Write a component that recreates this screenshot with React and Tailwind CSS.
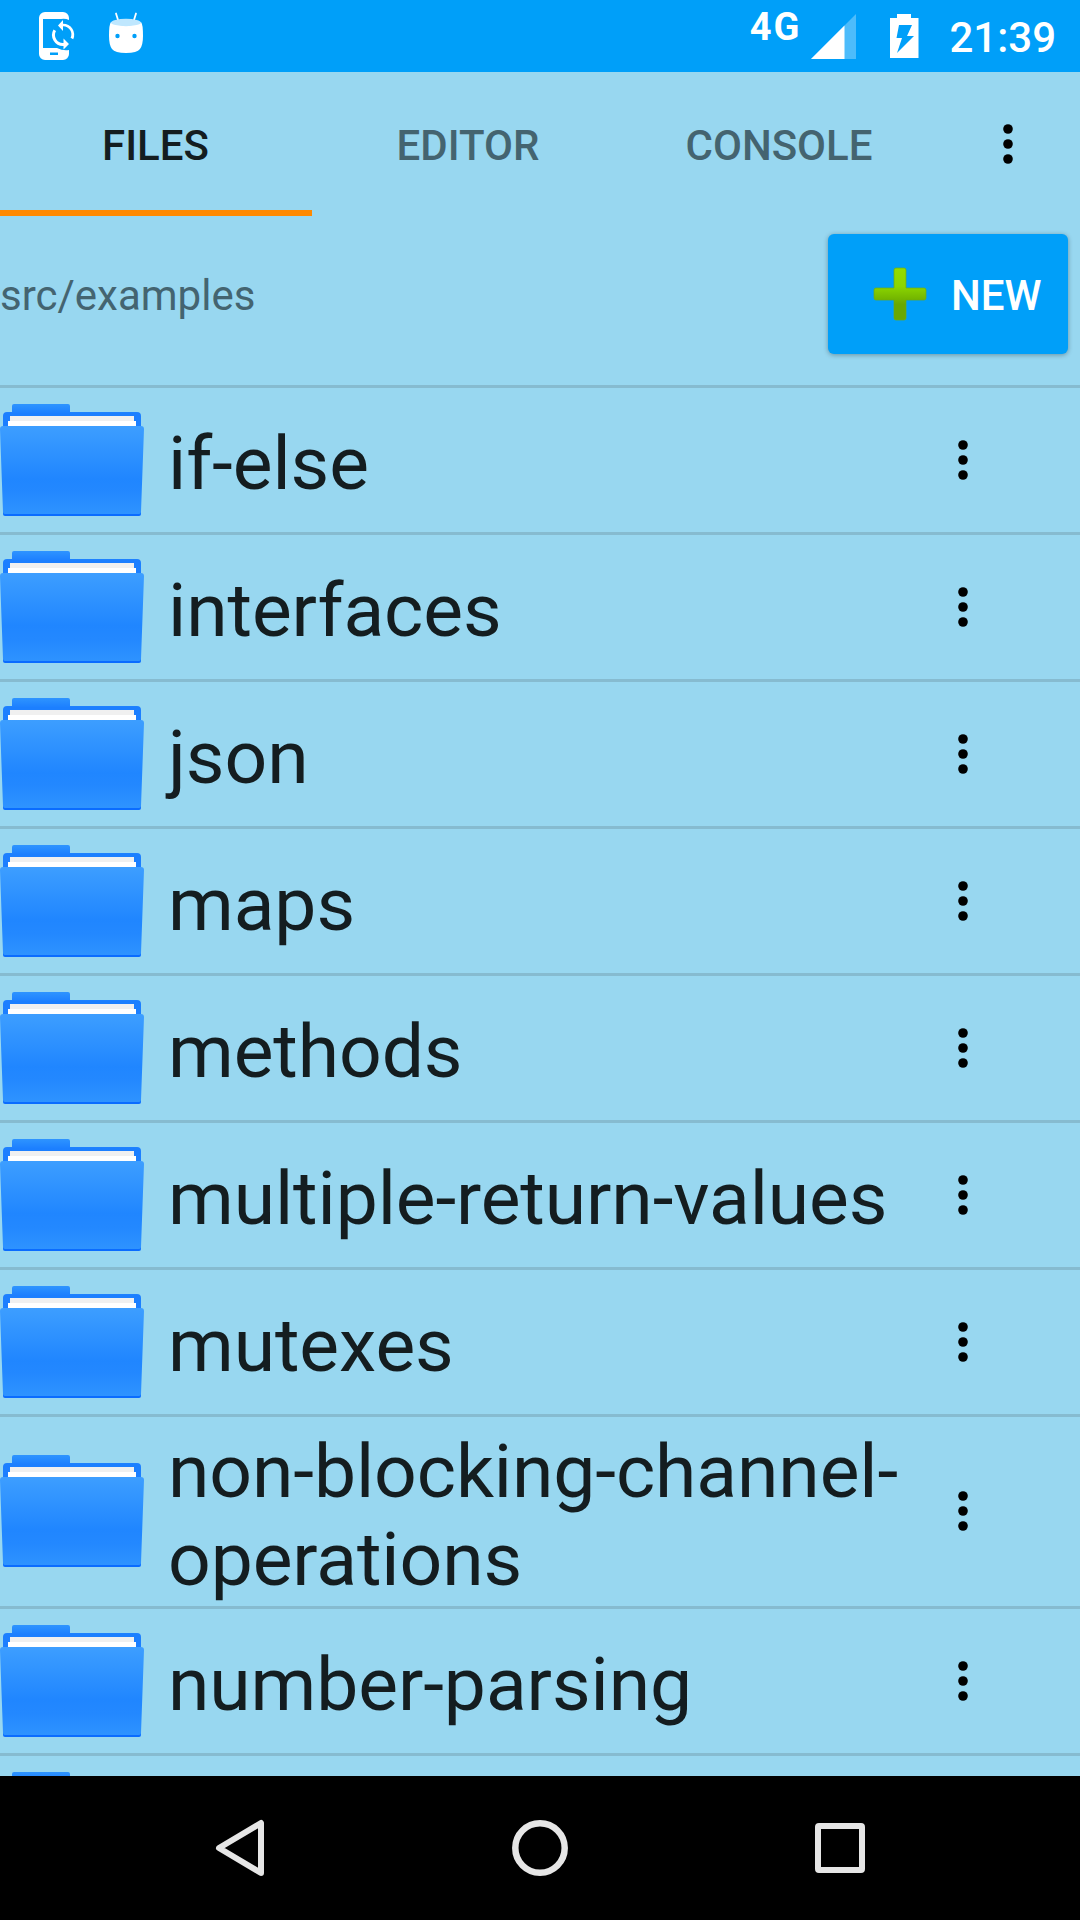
const FILES = [
  ["if-else"],
  ["interfaces"],
  ["json"],
  ["maps"],
  ["methods"],
  ["multiple-return-values"],
  ["mutexes"],
  ["non-blocking-channel-", "operations"],
  ["number-parsing"],
  [],
];

function Dots() {
  return (
    <svg width="12" height="42" viewBox="0 0 12 42" fill="#000">
      <circle cx="6" cy="6" r="4.8" />
      <circle cx="6" cy="21" r="4.8" />
      <circle cx="6" cy="36" r="4.8" />
    </svg>
  );
}

function Folder() {
  return (
    <svg width="144" height="112" viewBox="0 0 144 112" className="shrink-0">
      <defs>
        <linearGradient id="front" x1="0" y1="0" x2="0" y2="1">
          <stop offset="0" stopColor="#3d9eff" />
          <stop offset="0.6" stopColor="#2086ff" />
          <stop offset="0.75" stopColor="#2388ff" />
          <stop offset="1" stopColor="#2e93ff" />
        </linearGradient>
        <linearGradient id="back" x1="0" y1="0" x2="0" y2="1">
          <stop offset="0" stopColor="#2e94ff" />
          <stop offset="0.3" stopColor="#1c7fff" />
          <stop offset="1" stopColor="#1c7fff" />
        </linearGradient>
      </defs>
      <path d="M12 2a2 2 0 0 1 2-2h54a2 2 0 0 1 2 2v6h67a4 4 0 0 1 4 4v20H3V12a4 4 0 0 1 4-4h5z" fill="url(#back)" />
      <path d="M10 12h124v8H10z" fill="#f0f0f0" />
      <path d="M8 17h128v6H8z" fill="#fff" />
      <path d="M3 106h138v4a2 2 0 0 1-2 2H5a2 2 0 0 1-2-2z" fill="#0a6cff" />
      <path d="M0 25a3 3 0 0 1 3-3h138a3 3 0 0 1 3 3l-3 83a2 2 0 0 1-2 2H5a2 2 0 0 1-2-2z" fill="url(#front)" />
    </svg>
  );
}

function StatusBar() {
  return (
    <header className="flex h-[72px] shrink-0 bg-[#009ff9] text-white">
      <svg width="160" height="72" viewBox="0 0 160 72" fill="#fff">
        <path fillRule="evenodd" d="M45 12h18a6 6 0 0 1 6 6v2q-4-2-8-1H43v29h14q6 3 12 2v4a6 6 0 0 1-6 6H45a6 6 0 0 1-6-6V18a6 6 0 0 1 6-6zM50 52.500v2.500h8v-2.500z" />
        <path d="M58 25.500l5-5.500v3.700a11 11 0 0 1 10.200 15.600l-2.600-1.500A8 8 0 0 0 63 26.300V31z" />
        <path d="M69 44l-5.500 5.500V46A11 11 0 0 1 53.500 29.500l2.500 1.600A8 8 0 0 0 63.500 43v-4.500z" />
        <path d="M116 13.500l2.500 8M136 13.500l-2.500 8" stroke="#fff" strokeWidth="1.800" strokeLinecap="round" />
        <path fillRule="evenodd" d="M111 22q15 7 30 0 2 2 2 14 0 9-3 13-3 4-14 4t-14-4q-3-4-3-13 0-12 2-14zM117.500 33.800a2.200 2.200 0 1 0 0 4.400 2.200 2.200 0 0 0 0-4.400zM134.500 33.800a2.200 2.200 0 1 0 0 4.400 2.200 2.200 0 0 0 0-4.400z" />
        <ellipse cx="126" cy="22.500" rx="15" ry="3.700" fill="#bfe7fe" />
      </svg>
      <span className="mt-[8px] mr-[10px] ml-auto text-[38px] leading-[38px] font-bold tracking-[2px]">4G</span>
      <svg width="46" height="72" viewBox="0 0 46 72">
        <path d="M45 14v45H0z" fill="#4dbcfb" />
        <path d="M33.500 25.500V59H0z" fill="#fff" />
      </svg>
      <svg width="30" height="72" viewBox="0 0 30 72" className="ml-[32px]">
        <path fillRule="evenodd" d="M8 14h14v4h7.500v40H1V18h7zM10 25L7.500 38H13L8 53l17-17h-7l5-11z" fill="#fff" />
      </svg>
      <span className="mt-[17px] mr-[24px] ml-[30px] text-[42px] leading-[42px] font-medium">21:39</span>
    </header>
  );
}

function Tabs() {
  return (
    <nav className="flex h-36 shrink-0 text-[42px] font-medium text-[#446470]">
      <div className="flex w-[312px] items-center justify-center border-b-[6px] border-[#ff8900] pt-[8px] pr-px text-[#141d20]">FILES</div>
      <div className="flex w-[312px] items-center justify-center pt-[2px]">EDITOR</div>
      <div className="flex w-[312px] items-center justify-center pt-[2px] pr-[2px]">CONSOLE</div>
      <div className="flex flex-1 items-center justify-center"><Dots /></div>
    </nav>
  );
}

function PathRow() {
  return (
    <div className="flex h-[169px] shrink-0 items-start justify-between pt-[18px] pr-3">
      <span className="flex h-[120px] items-center pt-[2px] text-[42px] text-[#446470]">src/examples</span>
      <button className="flex h-[120px] w-[240px] items-center rounded-md bg-[#009ff9] pl-[45px] text-[42px] font-medium text-white shadow-[0_1px_5px_rgba(0,0,0,0.32)]">
        <svg width="54" height="54" viewBox="0 0 54 54">
          <defs>
            <linearGradient id="plus" x1="0" y1="0" x2="0" y2="1">
              <stop offset="0" stopColor="#94dc00" />
              <stop offset="0.35" stopColor="#8cd600" />
              <stop offset="0.7" stopColor="#69a800" />
              <stop offset="1" stopColor="#69a800" />
            </linearGradient>
          </defs>
          <path d="M23 1h8q2 0 2 2v18h18q2 0 2 2v8q0 2-2 2H33v18q0 2-2 2h-8q-2 0-2-2V33H3q-2 0-2-2v-8q0-2 2-2h18V3q0-2 2-2z" fill="url(#plus)" stroke="#6fae10" strokeWidth="0.7" />
        </svg>
        <span className="ml-[24px] pt-[2px]">NEW</span>
      </button>
    </div>
  );
}

function FileRow({ lines }) {
  const tall = lines.length > 1;
  return (
    <li className={`${tall ? "h-[192px] pb-px" : "h-[147px]"} flex shrink-0 items-center border-t-[3px] border-[#86bbd0]`}>
      <Folder />
      <div className={`${tall ? "pt-[8px]" : "pt-[6px]"} ml-6 w-[780px] text-[75px] leading-[88px] tracking-[-0.1px] whitespace-nowrap text-[#141d20]`}>
        {lines.map((line) => <div key={line}>{line}</div>)}
      </div>
      <div className="ml-[9px] flex"><Dots /></div>
    </li>
  );
}

export default function App() {
  return (
    <div className="flex h-[1920px] w-[1080px] flex-col overflow-hidden bg-[#98d7f0] font-['Roboto',sans-serif]">
      <StatusBar />
      <Tabs />
      <PathRow />
      <ul className="flex min-h-0 flex-1 flex-col overflow-hidden">
        {FILES.map((lines, i) => <FileRow key={i} lines={lines} />)}
      </ul>
      <footer className="flex h-36 shrink-0 items-center justify-center gap-[240px] bg-black">
        <svg width="60" height="60" viewBox="0 0 60 60" fill="none" stroke="#e6e6e6" strokeWidth="6" strokeLinejoin="round">
          <path d="M51 5v50L9 30z" />
        </svg>
        <svg width="60" height="60" viewBox="0 0 60 60" fill="none" stroke="#e6e6e6" strokeWidth="6.500">
          <circle cx="30" cy="30" r="24.700" />
        </svg>
        <svg width="60" height="60" viewBox="0 0 60 60" fill="none" stroke="#e6e6e6" strokeWidth="6" strokeLinejoin="round">
          <rect x="8" y="8" width="44" height="44" rx="1" />
        </svg>
      </footer>
    </div>
  );
}
